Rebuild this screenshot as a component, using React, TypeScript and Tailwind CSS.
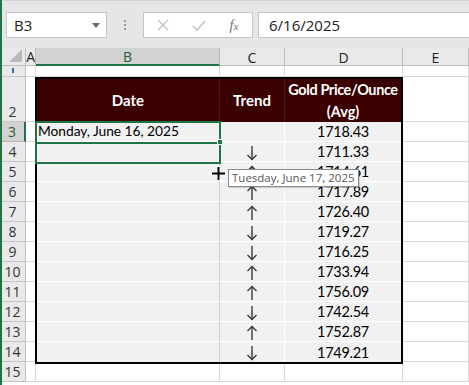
import type { ReactNode } from 'react'

type Trend = 'up' | 'down' | null

const ROWS: ReadonlyArray<{ trend: Trend; price: string }> = [
  { trend: null, price: '1718.43' },
  { trend: 'down', price: '1711.33' },
  { trend: 'up', price: '1714.61' },
  { trend: 'up', price: '1717.89' },
  { trend: 'up', price: '1726.40' },
  { trend: 'down', price: '1719.27' },
  { trend: 'down', price: '1716.25' },
  { trend: 'up', price: '1733.94' },
  { trend: 'up', price: '1756.09' },
  { trend: 'down', price: '1742.54' },
  { trend: 'up', price: '1752.87' },
  { trend: 'down', price: '1749.21' },
]

const UI_FONT = { fontFamily: '"Open Sans", "Noto Sans", sans-serif' }
const CELL_FONT = { fontFamily: 'Lato, "Liberation Sans", sans-serif' }

function Arrow({ dir }: { dir: 'up' | 'down' }) {
  return (
    <svg width="12" height="16" viewBox="0 0 12 16" fill="none" stroke="#3a3a3a" strokeWidth="1.4">
      {dir === 'up' ? (
        <>
          <path d="M6 1.5 V15" />
          <path d="M1.5 6 L6 1.5 L10.5 6" />
        </>
      ) : (
        <>
          <path d="M6 1 V14.5" />
          <path d="M1.5 10 L6 14.5 L10.5 10" />
        </>
      )}
    </svg>
  )
}

function RowHead({ children, active, className = '' }: { children: ReactNode; active?: boolean; className?: string }) {
  return (
    <div
      className={`flex items-center justify-center overflow-hidden border-b border-r text-[14px] leading-none ${
        active
          ? 'border-b-[#b8b8b8] border-r-2 border-r-[#217346] bg-[#d2d2d2] text-[#1d5e36]'
          : 'border-b-[#c4c4c4] border-r-[#bdbdbd] bg-[#e9e9e9] text-[#333]'
      } ${className}`}
      style={UI_FONT}
    >
      {children}
    </div>
  )
}

function Blank({ className = '' }: { className?: string }) {
  return <div className={`border-b border-r border-[#d9d9d9] bg-white ${className}`} />
}

function FormulaBar() {
  return (
    <div className="flex h-[48px] items-start gap-[5px] border-t border-[#d4d4d4] bg-[#e6e6e6] pl-[6px] pt-[11px]" style={UI_FONT}>
      <div className="flex h-[26px] w-[101px] items-center justify-between border border-[#c6c6c6] bg-white pl-[7px] pr-[6px] text-[15px] text-[#222]">
        <span>B3</span>
        <svg width="8" height="5" viewBox="0 0 8 5">
          <path d="M0 0 H8 L4 5 Z" fill="#6b6b6b" />
        </svg>
      </div>
      <div className="flex h-[26px] w-[26px] flex-col items-center justify-center gap-[2px]">
        <span className="h-[2px] w-[2px] bg-[#9a9a9a]" />
        <span className="h-[2px] w-[2px] bg-[#9a9a9a]" />
        <span className="h-[2px] w-[2px] bg-[#9a9a9a]" />
      </div>
      <div className="flex h-[26px] w-[110px] items-center border border-[#c6c6c6] bg-white">
        <div className="flex w-[38px] justify-center">
          <svg width="12" height="12" viewBox="0 0 12 12" stroke="#c3c3c3" strokeWidth="1.4">
            <path d="M1 1 L11 11 M11 1 L1 11" />
          </svg>
        </div>
        <div className="flex w-[34px] justify-center">
          <svg width="14" height="11" viewBox="0 0 14 11" fill="none" stroke="#c3c3c3" strokeWidth="1.6">
            <path d="M1 6 L5 10 L13 1" />
          </svg>
        </div>
        <div className="flex w-[36px] justify-center">
          <span className="text-[14px] italic text-[#707070]" style={{ fontFamily: '"Liberation Serif", serif' }}>
            f<span className="text-[11px]">x</span>
          </span>
        </div>
      </div>
      <div className="flex h-[26px] flex-1 items-center border border-r-0 border-[#c6c6c6] bg-white pl-[10px] text-[15px] text-[#222]">
        6/16/2025
      </div>
    </div>
  )
}

function DataTable() {
  return (
    <div
      className="relative z-10 col-start-3 col-span-3 row-start-3 row-span-13 -ml-px grid h-[287px] self-start grid-cols-[183px_65px_1fr] grid-rows-[43px_repeat(11,20px)_20px] border-2 border-black"
      style={CELL_FONT}
    >
      <div className="flex items-center justify-center border-r border-[#5a1010] bg-[#3a0000] text-[15px] font-bold text-white">Date</div>
      <div className="flex items-center justify-center border-r border-[#5a1010] bg-[#3a0000] text-[15px] font-bold text-white">Trend</div>
      <div className="flex flex-col items-center justify-center bg-[#3a0000] text-[14.5px] font-bold leading-[22px] text-white">
        <span className="tracking-[-0.4px]">Gold Price/Ounce</span>
        <span>(Avg)</span>
      </div>
      {ROWS.map((r, i) => {
        const last = i === ROWS.length - 1
        const line = last ? '' : 'border-b border-b-white'
        return (
          <div key={i} className="contents">
            <div className={`flex items-center border-r border-r-[#d0d0d0] bg-[#f1f1f1] pl-[1px] text-[13.8px] tracking-[-0.05px] text-black ${line}`}>
              {i === 0 ? 'Monday, June 16, 2025' : ''}
            </div>
            <div className={`flex items-center justify-center border-r border-r-white bg-[#f1f1f1] pt-[2px] ${line}`}>
              {r.trend && <Arrow dir={r.trend} />}
            </div>
            <div className={`flex items-center justify-center bg-[#f1f1f1] pt-[1px] text-[14.5px] tracking-[-0.3px] text-black ${line}`}>
              {r.price}
            </div>
          </div>
        )
      })}
    </div>
  )
}

function Sheet() {
  const rowNums = [3, 4, 5, 6, 7, 8, 9, 10, 11, 12, 13, 14, 15]
  return (
    <div className="relative grid grid-cols-[26px_10px_184px_65px_118px_66px] grid-rows-[18px_11px_45px_repeat(13,20px)_1fr]">
      {/* corner */}
      <div className="flex items-end justify-end border-b border-r border-[#bdbdbd] bg-[#e9e9e9] pb-[3px] pr-[3px]">
        <svg width="13" height="13" viewBox="0 0 13 13">
          <path d="M13 0 V13 H0 Z" fill="#b9b9b9" />
        </svg>
      </div>
      <div className="flex items-center justify-end overflow-hidden border-b border-r border-[#bdbdbd] bg-[#e9e9e9] text-[14px] text-[#222]" style={UI_FONT}>
        A
      </div>
      <div className="flex items-center justify-center border-b-2 border-r border-b-[#217346] border-r-[#bdbdbd] bg-[#d2d2d2] pt-[1px] text-[14px] text-[#1d5e36]" style={UI_FONT}>
        B
      </div>
      {['C', 'D', 'E'].map((c) => (
        <div key={c} className="flex items-center justify-center border-b border-r border-[#bdbdbd] bg-[#e9e9e9] pt-[1px] text-[14px] text-[#222]" style={UI_FONT}>
          {c}
        </div>
      ))}

      {/* row 1 */}
      <RowHead className="items-start pt-[2px]">
        <span className="block h-[5px] w-[2px] bg-[#3c6ea8]" />
      </RowHead>
      <Blank />
      <Blank />
      <Blank />
      <Blank />
      <Blank />

      {/* row 2 */}
      <RowHead className="items-end pb-[2px]">2</RowHead>
      <Blank className="col-start-2 row-start-3" />
      <Blank className="col-start-6 row-start-3" />

      {rowNums.map((n, i) => (
        <div key={n} className="contents">
          <div style={{ gridColumn: 1, gridRow: i + 4 }}>
            <RowHead active={n === 3} className="h-full">{n}</RowHead>
          </div>
          <div style={{ gridColumn: 2, gridRow: i + 4 }} className="border-b border-r border-[#d9d9d9] bg-white" />
          <div style={{ gridColumn: 6, gridRow: i + 4 }} className="border-b border-r border-[#d9d9d9] bg-white" />
        </div>
      ))}

      {/* row 15 B-D cells */}
      <div style={{ gridColumn: 3, gridRow: 16 }} className="border-b border-r border-[#d9d9d9] bg-white" />
      <div style={{ gridColumn: 4, gridRow: 16 }} className="border-b border-r border-[#d9d9d9] bg-white" />
      <div style={{ gridColumn: 5, gridRow: 16 }} className="border-b border-r border-[#d9d9d9] bg-white" />

      <DataTable />

      {/* selection outline B3:B4 */}
      <div className="pointer-events-none absolute left-[35px] top-[73px] z-20 h-[43px] w-[186px] border-2 border-[#217346]">
        <div className="mt-[19px] h-[2px] w-full bg-[#217346]" />
      </div>
      <div className="absolute left-[217px] top-[91px] z-20 h-[6px] w-[6px] border border-white bg-[#217346]" />

      {/* cursor */}
      <svg className="absolute left-[211px] top-[118px] z-30" width="15" height="15" viewBox="0 0 15 15">
        <path d="M6 0 H9 V6 H15 V9 H9 V15 H6 V9 H0 V6 H6 Z" fill="white" />
        <path d="M6.5 1 H8.5 V6.5 H14 V8.5 H8.5 V14 H6.5 V8.5 H1 V6.5 H6.5 Z" fill="black" />
      </svg>

      {/* autofill tooltip */}
      <div
        className="absolute left-[228px] top-[121px] z-30 flex h-[18px] items-center border border-[#8a8a8a] bg-white px-[3px] text-[11.5px] text-[#575757] shadow-[1px_1px_1px_rgba(0,0,0,0.15)]"
        style={UI_FONT}
      >
        Tuesday, June 17, 2025
      </div>
    </div>
  )
}

export default function App() {
  return (
    <div className="h-[385px] w-[469px] overflow-hidden border-l-2 border-[#217346] bg-white">
      <div className="-ml-[2px]">
        <FormulaBar />
        <Sheet />
      </div>
    </div>
  )
}
